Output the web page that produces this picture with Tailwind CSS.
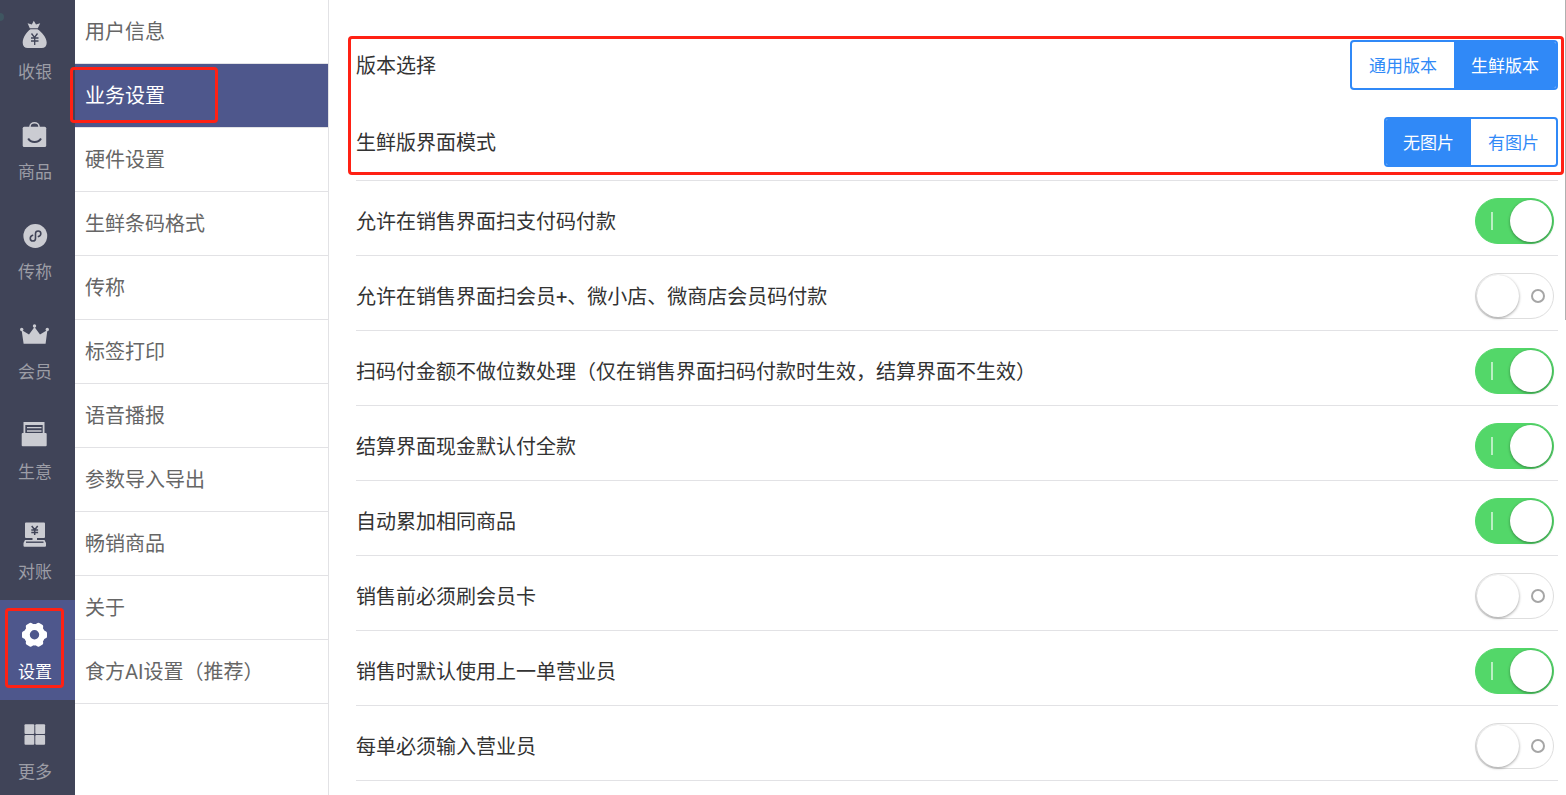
<!DOCTYPE html>
<html lang="zh-CN">
    <head>
        <meta charset="UTF-8">
        <meta name="viewport" content="width=device-width, initial-scale=1.0">
        <title>业务设置</title>
        <script src="https://cdn.jsdelivr.net/npm/@tailwindcss/browser@4"></script>
    </head>
    <body class="flex h-screen overflow-hidden bg-white font-[Roboto,'Noto_Sans_CJK_SC',sans-serif] text-xl text-[#333]">

        <!-- main nav -->
        <nav class="relative w-[75px] shrink-0 bg-[#404458] text-[17px] leading-6 text-[#9c9da6]">
            <span class="absolute top-[13px] -left-1 size-2 rounded-full bg-[#3f5661]"></span>
            <a href="#" class="flex h-[100px] flex-col items-center gap-3 pt-5 pr-[5px]">
                <svg class="size-7 overflow-visible text-[#cbccd2]" viewBox="0 0 28 28" fill="currentColor">
                    <path d="M8.800 8.300 6.600 3.200l4.200 1.200L12.800.7l2.200 3.700 4.200-1.200-2.400 5.100z"/>
                    <path d="M9.500 9.300h7c4 2.500 9.200 8 9.200 13.500 0 3.500-2 5.200-5 5.200H6.700c-3 0-5-1.700-5-5.200 0-5.500 4-11 7.800-13.500z"/>
                    <path d="m10.500 13.500 3 4 3-4M10 18h7.500M10 21h7.500M13.700 17.500V25" fill="none" stroke="#404458" stroke-width="1.300"/>
                </svg>
                收银
            </a>
            <a href="#" class="flex h-[100px] flex-col items-center gap-3 pt-5 pr-[5px]">
                <svg class="size-7 overflow-visible text-[#cbccd2]" viewBox="0 0 28 28" fill="currentColor">
                    <path d="M9 8V6.500a4.500 3.700 0 0 1 9 0V8" fill="none" stroke="currentColor" stroke-width="1.500"/>
                    <rect x="1.700" y="6.800" width="23.500" height="20.200" rx="1.500"/>
                    <path d="M7.200 18.500c2.500 4.500 10.300 4.500 12.800 0" fill="none" stroke="#404458" stroke-width="2"/>
                </svg>
                商品
            </a>
            <a href="#" class="flex h-[100px] flex-col items-center gap-3 pt-5 pr-[5px]">
                <svg class="size-7 overflow-visible text-[#cbccd2]" viewBox="0 0 28 28" fill="currentColor">
                    <circle cx="14.300" cy="16" r="11.900"/>
                    <path d="M11.600 15.300c-3.300 1.200-3 5.700.3 5.700 1.500 0 2.600-1.200 2.600-2.600v-4.800c0-1.500 1.200-2.600 2.700-2.600 3.300 0 3.600 4.500.2 5.600" fill="none" stroke="#404458" stroke-width="1.600" stroke-linecap="round"/>
                </svg>
                传称
            </a>
            <a href="#" class="flex h-[100px] flex-col items-center gap-3 pt-5 pr-[5px]">
                <svg class="size-7 overflow-visible text-[#cbccd2]" viewBox="0 0 28 28" fill="currentColor">
                    <path d="M2.600 23.800.6 10l7.400 4.500L13.500 7 19 14.500l7.400-4.500-1.800 13.800z"/>
                    <circle cx=".7" cy="9.500" r="1.700"/>
                    <circle cx="13.500" cy="6" r="1.700"/>
                    <circle cx="26.300" cy="9.500" r="1.700"/>
                </svg>
                会员
            </a>
            <a href="#" class="flex h-[100px] flex-col items-center gap-3 pt-5 pr-[5px]">
                <svg class="size-7 overflow-visible text-[#cbccd2]" viewBox="0 0 28 28" fill="currentColor">
                    <path d="M2.500 13V2h21v11h-1.800V5H4.300v8z"/>
                    <path d="M6 7h14.500v1.300H6zM6 10.200h14.500v1.600H6z"/>
                    <rect x=".7" y="13" width="25" height="13.300" rx="1"/>
                </svg>
                生意
            </a>
            <a href="#" class="flex h-[100px] flex-col items-center gap-3 pt-5 pr-[5px]">
                <svg class="size-7 overflow-visible text-[#cbccd2]" viewBox="0 0 28 28" fill="currentColor">
                    <path d="M5 2.500h18a1 1 0 0 1 1 1V17a1 1 0 0 1-1 1h-7v2h7.500l1.500 3v2.700a1 1 0 0 1-1 1H3.500a1 1 0 0 1-1-1V23L4 20h7.500v-2H5a1 1 0 0 1-1-1V3.500a1 1 0 0 1 1-1z"/>
                    <path d="m10.700 6 3 3.800 3-3.800M10.300 10h6.800M10.300 12.500h6.800M13.700 9.500V15" fill="none" stroke="#404458" stroke-width="1.500"/>
                    <path d="M5 22.200h17.500" stroke="#404458" stroke-width="1.400"/>
                </svg>
                对账
            </a>
            <a href="#" class="relative flex h-[100px] flex-col items-center gap-3 bg-[#4e578c] pt-5 pr-[5px] text-white">
                <svg class="size-7 overflow-visible" viewBox="0 0 28 28" fill="currentColor">
                    <circle cx="13.500" cy="14.700" r="7.700" fill="none" stroke="currentColor" stroke-width="6"/>
                    <g fill="none" stroke="currentColor" stroke-width="4" stroke-linejoin="round">
                        <path d="M21.500 12l2.500 1v3.400l-2.500 1zM5.500 12 3 13v3.400l2.500 1z"/>
                        <path d="M21.500 12l2.500 1v3.400l-2.500 1zM5.500 12 3 13v3.400l2.500 1z" transform="rotate(60 13.500 14.700)"/>
                        <path d="M21.500 12l2.500 1v3.400l-2.500 1zM5.500 12 3 13v3.400l2.500 1z" transform="rotate(120 13.500 14.700)"/>
                    </g>
                </svg>
                设置
                <span class="absolute top-2 left-[5px] h-20 w-[59px] rounded border-3 border-[#ff2114]"></span>
            </a>
            <a href="#" class="flex h-[100px] flex-col items-center gap-3 pt-5 pr-[5px]">
                <svg class="size-7 overflow-visible text-[#cbccd2]" viewBox="0 0 28 28" fill="currentColor">
                    <rect x="3.500" y="4.200" width="9.800" height="9.800" rx="1"/>
                    <rect x="14.300" y="4.200" width="9.800" height="9.800" rx="1"/>
                    <rect x="3.500" y="15" width="9.800" height="9.800" rx="1"/>
                    <rect x="14.300" y="15" width="9.800" height="9.800" rx="1"/>
                </svg>
                更多
            </a>
        </nav>

        <!-- settings menu -->
        <nav class="w-[254px] shrink-0 border-r border-[#e2e2e5] text-[#666]">
            <a href="#" class="flex h-16 items-center border-b border-[#e2e2e5] px-[10px]">用户信息</a>
            <a href="#" class="relative flex h-16 items-center border-b border-[#e2e2e5] bg-[#4e578c] px-[10px] text-white">
                业务设置
                <span class="absolute top-[3px] -left-[5px] h-14 w-[148px] rounded border-3 border-[#ff2114]"></span>
            </a>
            <a href="#" class="flex h-16 items-center border-b border-[#e2e2e5] px-[10px]">硬件设置</a>
            <a href="#" class="flex h-16 items-center border-b border-[#e2e2e5] px-[10px]">生鲜条码格式</a>
            <a href="#" class="flex h-16 items-center border-b border-[#e2e2e5] px-[10px]">传称</a>
            <a href="#" class="flex h-16 items-center border-b border-[#e2e2e5] px-[10px]">标签打印</a>
            <a href="#" class="flex h-16 items-center border-b border-[#e2e2e5] px-[10px]">语音播报</a>
            <a href="#" class="flex h-16 items-center border-b border-[#e2e2e5] px-[10px]">参数导入导出</a>
            <a href="#" class="flex h-16 items-center border-b border-[#e2e2e5] px-[10px]">畅销商品</a>
            <a href="#" class="flex h-16 items-center border-b border-[#e2e2e5] px-[10px]">关于</a>
            <a href="#" class="flex h-16 items-center border-b border-[#e2e2e5] px-[10px]">食方AI设置（推荐）</a>
        </nav>

        <!-- content -->
        <main class="relative min-w-0 flex-1 pt-10 pr-2 pl-[27px]">
            <div class="absolute top-0 right-0 h-80 w-px bg-[#b0b0b0]"></div>

            <section class="relative flex flex-col gap-[27px] border-b border-[#e2e2e5] pb-[13px]">
                <div class="flex items-center justify-between">
                    <span id="version" class="pt-0.5">版本选择</span>
                    <div role="group" aria-labelledby="version" class="flex h-[50px] overflow-hidden rounded border-2 border-[#3089f7] text-[17px]">
                        <button type="button" class="px-[17px] pt-[3px] text-[#3089f7]">通用版本</button>
                        <button type="button" class="bg-[#3089f7] px-[17px] pt-[3px] text-white">生鲜版本</button>
                    </div>
                </div>
                <div class="flex items-center justify-between">
                    <span id="mode" class="pt-0.5">生鲜版界面模式</span>
                    <div role="group" aria-labelledby="mode" class="flex h-[50px] overflow-hidden rounded border-2 border-[#3089f7] text-[17px]">
                        <button type="button" class="bg-[#3089f7] px-[17px] pt-[3px] text-white">无图片</button>
                        <button type="button" class="px-[17px] pt-[3px] text-[#3089f7]">有图片</button>
                    </div>
                </div>
                <span class="pointer-events-none absolute -top-1 -right-[6px] bottom-[5px] -left-2 rounded border-3 border-[#ff2114]"></span>
            </section>

            <div class="toggles"></div>
        </main>

        <script>
            const toggles = [
                ['允许在销售界面扫支付码付款', true],
                ['允许在销售界面扫会员+、微小店、微商店会员码付款', false],
                ['扫码付金额不做位数处理（仅在销售界面扫码付款时生效，结算界面不生效）', true],
                ['结算界面现金默认付全款', true],
                ['自动累加相同商品', true],
                ['销售前必须刷会员卡', false],
                ['销售时默认使用上一单营业员', true],
                ['每单必须输入营业员', false],
            ]

            // before: on/off mark, after: knob
            document.querySelector('.toggles').innerHTML = toggles.map(([ name, on ]) => `
                <label class="flex h-[75px] items-center justify-between border-b border-[#e2e2e5] pt-[6px] pr-1">
                    <span class="pt-0.5">${ name }</span>
                    <input type="checkbox" ${ on ? 'checked' : '' } class="relative h-[46px] w-[79px] shrink-0 appearance-none rounded-full border border-[#dedede] bg-white
                        before:absolute before:top-[15px] before:right-2 before:size-[14px] before:rounded-full before:border-2 before:border-[#a6a6a6]
                        after:absolute after:top-px after:left-px after:size-[42px] after:rounded-full after:bg-white after:shadow-[0_1px_3px_rgba(0,0,0,0.4)]
                        checked:border-[#53d769] checked:bg-[#53d769]
                        checked:before:top-[13px] checked:before:left-[15px] checked:before:h-[18px] checked:before:w-[2px] checked:before:rounded-none checked:before:border-0 checked:before:bg-white/60
                        checked:after:left-[34px]">
                </label>
            `).join('')
        </script>
    </body>
</html>
